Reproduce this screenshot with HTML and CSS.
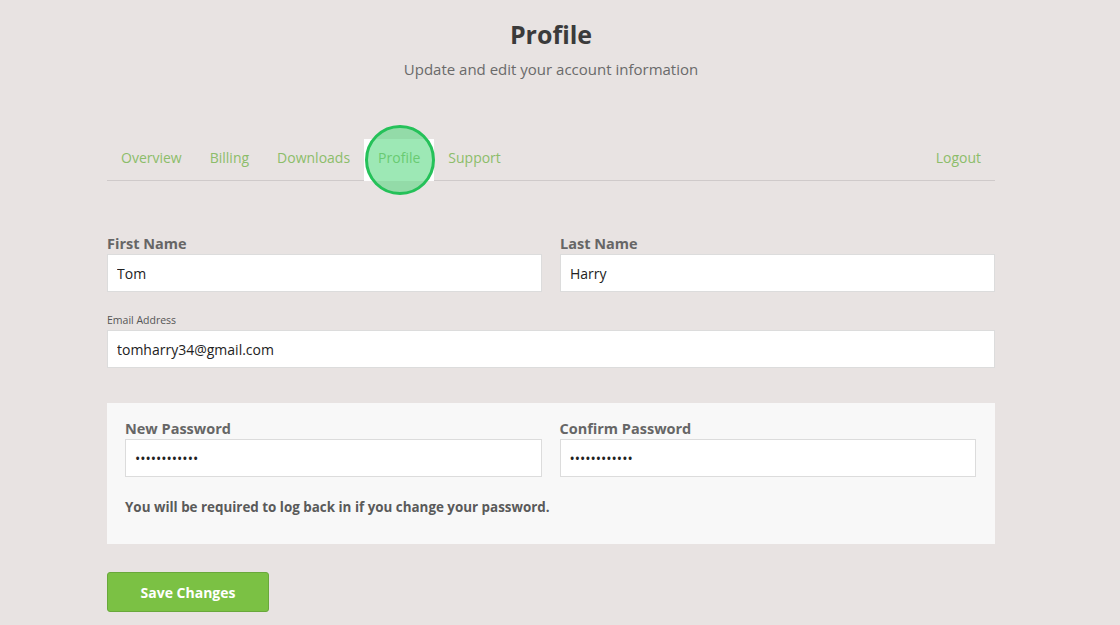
FILE: index.html
```html
<!DOCTYPE html>
<html lang="en">
<head>
    <meta charset="UTF-8">
    <meta name="viewport" content="width=device-width, initial-scale=1.0">
    <link rel="stylesheet" href="styles.css">
</head>
<body>
    <div class="page">
        <div class="header">
            <h1>Profile</h1>
            <p class="subtitle">Update and edit your account information</p>
        </div>

        <div class="tabs">
            <a class="tab">Overview</a>
            <a class="tab">Billing</a>
            <a class="tab">Downloads</a>
            <a class="tab active">Profile<span class="click-marker"></span></a>
            <a class="tab">Support</a>
            <a class="tab logout">Logout</a>
        </div>

        <form class="profile-form">
            <div class="row">
                <div class="field">
                    <label>First Name</label>
                    <input type="text" value="Tom">
                </div>
                <div class="field">
                    <label>Last Name</label>
                    <input type="text" value="Harry">
                </div>
            </div>

            <div class="field email">
                <label class="small">Email Address</label>
                <input type="text" value="tomharry34@gmail.com">
            </div>

            <div class="password-box">
                <div class="row">
                    <div class="field">
                        <label>New Password</label>
                        <input type="password" value="passwordtext">
                    </div>
                    <div class="field">
                        <label>Confirm Password</label>
                        <input type="password" value="passwordtext">
                    </div>
                </div>
                <p class="note">You will be required to log back in if you change your password.</p>
            </div>

            <button type="button" class="save-button">Save Changes</button>
        </form>
    </div>
</body>
</html>
```

FILE: styles.css
```css
* {
    margin: 0;
    padding: 0;
    box-sizing: border-box;
}

body {
    font-family: "Open Sans", Arial, sans-serif;
    background-color: #e8e3e2;
    color: #444;
    padding-right: 18px;
}

.page {
    width: 888px;
    margin: 0 auto;
}

.header {
    text-align: center;
    padding-top: 17px;
}

.header h1 {
    font-size: 25px;
    line-height: 34px;
    font-weight: 700;
    color: #3b3b3b;
}

.subtitle {
    margin-top: 8px;
    font-size: 15px;
    line-height: 20px;
    color: #6a6a6a;
}

.tabs {
    display: flex;
    margin-top: 60px;
    border-bottom: 1px solid #cfcaca;
}

.tab {
    position: relative;
    padding: 0 14px 3px;
    height: 41px;
    line-height: 38px;
    font-size: 14px;
    color: #8cbd6a;
    cursor: pointer;
}

.tab.active {
    background-color: #fff;
    margin-bottom: -1px;
    height: 42px;
}

.tab.logout {
    margin-left: auto;
}

.click-marker {
    position: absolute;
    left: 1px;
    top: -14px;
    width: 70px;
    height: 70px;
    border-radius: 50%;
    background: rgba(76, 214, 120, 0.55);
    border: 3px solid #25c159;
    pointer-events: none;
}

.profile-form {
    margin-top: 54px;
}

.row {
    display: flex;
    gap: 18px;
}

.field {
    flex: 1;
    display: flex;
    flex-direction: column;
}

.field label {
    font-size: 14.5px;
    line-height: 18px;
    font-weight: 700;
    color: #666;
    margin-bottom: 1px;
}

.field label.small {
    font-size: 10.5px;
    line-height: 14px;
    font-weight: 400;
    color: #555;
    margin-bottom: 3px;
}

.field input {
    height: 38px;
    padding: 0 9px;
    border: 1px solid #dcdcdc;
    background: #fff;
    font-family: "Open Sans", Arial, sans-serif;
    font-size: 14px;
    color: #222;
    outline: none;
}

.field.email {
    margin-top: 21px;
}

.password-box {
    margin-top: 35px;
    background-color: #f8f8f8;
    padding: 17px 19px 29px 18px;
}

.note {
    margin-top: 22px;
    font-size: 13.4px;
    line-height: 16px;
    font-weight: 700;
    color: #5a5a5a;
}

.save-button {
    margin-top: 28px;
    width: 162px;
    height: 40px;
    background-color: #7bc144;
    border: 1px solid #69a83b;
    border-radius: 3px;
    color: #fff;
    font-family: "Open Sans", Arial, sans-serif;
    font-size: 14px;
    font-weight: 700;
    cursor: pointer;
}
```
